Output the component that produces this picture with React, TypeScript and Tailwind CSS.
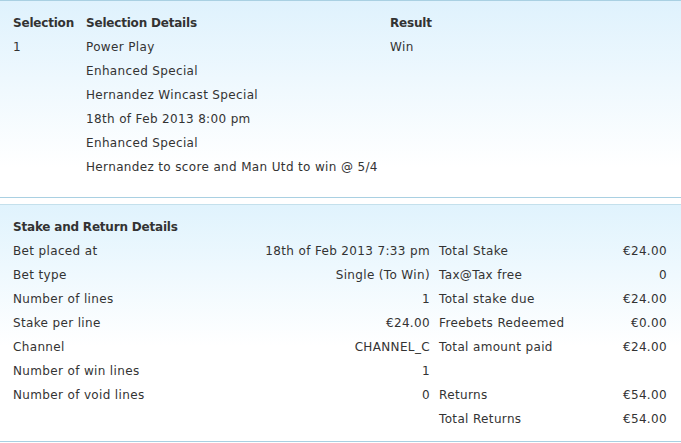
const selectionLines = [
  "Power Play",
  "Enhanced Special",
  "Hernandez Wincast Special",
  "18th of Feb 2013 8:00 pm",
  "Enhanced Special",
  "Hernandez to score and Man Utd to win @ 5/4",
];

const stakeRows: [string, string, string, string][] = [
  ["Bet placed at", "18th of Feb 2013 7:33 pm", "Total Stake", "€24.00"],
  ["Bet type", "Single (To Win)", "Tax@Tax free", "0"],
  ["Number of lines", "1", "Total stake due", "€24.00"],
  ["Stake per line", "€24.00", "Freebets Redeemed", "€0.00"],
  ["Channel", "CHANNEL_C", "Total amount paid", "€24.00"],
  ["Number of win lines", "1", "", ""],
  ["Number of void lines", "0", "Returns", "€54.00"],
  ["", "", "Total Returns", "€54.00"],
];

export default function App() {
  return (
    <div className="w-[681px] h-[443px] bg-white text-[12px] tracking-[0.35px] text-[#333] font-['DejaVu_Sans',Verdana,sans-serif] overflow-hidden">
      {/* Selection block */}
      <section className="border-y border-[#a9d0e2] bg-gradient-to-b from-[#dff2fd] to-white to-85% pt-[10px] pb-[18px] pl-[13px] pr-[14px]">
        <div className="grid grid-cols-[73px_304px_1fr] auto-rows-[24px] items-center">
          <div className="font-bold tracking-[-0.2px]">Selection</div>
          <div className="font-bold tracking-[-0.2px]">Selection Details</div>
          <div className="font-bold tracking-[-0.2px]">Result</div>

          <div>1</div>
          <div>{selectionLines[0]}</div>
          <div>Win</div>
          {selectionLines.slice(1).map((line) => (
            <div key={line} className="col-start-2 whitespace-nowrap">
              {line}
            </div>
          ))}
        </div>
      </section>

      {/* Stake and return block */}
      <section className="mt-[6px] border-t border-t-[#c4e0ec] border-b border-b-[#a9d0e2] bg-gradient-to-b from-[#e0f3fd] to-white to-60% pt-[10px] pb-[10px] pl-[13px] pr-[14px]">
        <div className="grid grid-cols-[218px_190px_1fr_auto] gap-x-[9px] auto-rows-[24px] items-center">
          <div className="col-span-4 font-bold tracking-[-0.2px]">Stake and Return Details</div>
          {stakeRows.map(([label, value, label2, value2], i) => (
            <div key={i} className="contents">
              <div className="whitespace-nowrap">{label}</div>
              <div className="text-right whitespace-nowrap">{value}</div>
              <div className="whitespace-nowrap">{label2}</div>
              <div className="text-right">{value2}</div>
            </div>
          ))}
        </div>
      </section>
    </div>
  );
}
